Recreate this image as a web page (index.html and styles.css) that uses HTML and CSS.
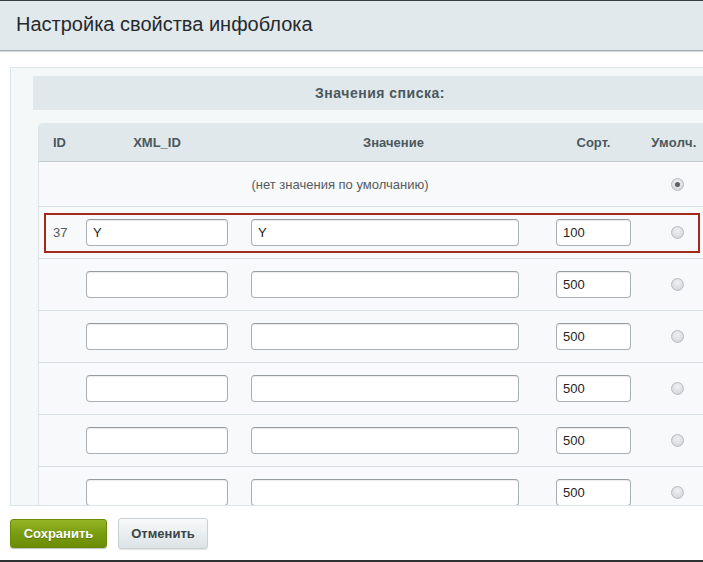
FILE: index.html
```html
<!DOCTYPE html>
<html lang="ru">
<head>
<meta charset="utf-8">
<title>Настройка свойства инфоблока</title>
<link rel="stylesheet" href="styles.css">
</head>
<body>
<div class="window">
  <div class="titlebar"><h1 class="title">Настройка свойства инфоблока</h1></div>
  <div class="content">
    <div class="panel">
      <div class="section-head">Значения списка:</div>
      <div class="table">
        <div class="row head">
          <div class="c-id">ID</div>
          <div class="c-xml">XML_ID</div>
          <div class="c-val">Значение</div>
          <div class="c-sort">Сорт.</div>
          <div class="c-def">Умолч.</div>
        </div>
        <div class="row none">
          <div class="c-none">(нет значения по умолчанию)</div>
          <div class="c-def"><span class="radio checked"></span></div>
        </div>
        <div class="row item marked">
          <div class="c-id">37</div>
          <div class="c-xml"><input class="field f-xml" type="text" value="Y"></div>
          <div class="c-val"><input class="field f-val" type="text" value="Y"></div>
          <div class="c-sort"><input class="field f-sort" type="text" value="100"></div>
          <div class="c-def"><span class="radio"></span></div>
          <div class="mark"></div>
        </div>
        <div class="row item">
          <div class="c-id"></div>
          <div class="c-xml"><input class="field f-xml" type="text" value=""></div>
          <div class="c-val"><input class="field f-val" type="text" value=""></div>
          <div class="c-sort"><input class="field f-sort" type="text" value="500"></div>
          <div class="c-def"><span class="radio"></span></div>
        </div>
        <div class="row item">
          <div class="c-id"></div>
          <div class="c-xml"><input class="field f-xml" type="text" value=""></div>
          <div class="c-val"><input class="field f-val" type="text" value=""></div>
          <div class="c-sort"><input class="field f-sort" type="text" value="500"></div>
          <div class="c-def"><span class="radio"></span></div>
        </div>
        <div class="row item">
          <div class="c-id"></div>
          <div class="c-xml"><input class="field f-xml" type="text" value=""></div>
          <div class="c-val"><input class="field f-val" type="text" value=""></div>
          <div class="c-sort"><input class="field f-sort" type="text" value="500"></div>
          <div class="c-def"><span class="radio"></span></div>
        </div>
        <div class="row item">
          <div class="c-id"></div>
          <div class="c-xml"><input class="field f-xml" type="text" value=""></div>
          <div class="c-val"><input class="field f-val" type="text" value=""></div>
          <div class="c-sort"><input class="field f-sort" type="text" value="500"></div>
          <div class="c-def"><span class="radio"></span></div>
        </div>
        <div class="row item">
          <div class="c-id"></div>
          <div class="c-xml"><input class="field f-xml" type="text" value=""></div>
          <div class="c-val"><input class="field f-val" type="text" value=""></div>
          <div class="c-sort"><input class="field f-sort" type="text" value="500"></div>
          <div class="c-def"><span class="radio"></span></div>
        </div>
      </div>
    </div>
  </div>
  <div class="buttons">
    <button class="btn btn-save" type="button">Сохранить</button>
    <button class="btn btn-cancel" type="button">Отменить</button>
  </div>
</div>
</body>
</html>
```

FILE: styles.css
```css
* { box-sizing: border-box; }
html, body {
  margin: 0;
  padding: 0;
  background: #ffffff;
  font-family: "Liberation Sans", Arial, sans-serif;
}
.window {
  width: 703px;
  height: 562px;
  overflow: hidden;
  display: flex;
  flex-direction: column;
  border-bottom: 2px solid #2f3233;
}
.titlebar {
  flex: none;
  height: 51px;
  background: #e1e9ec;
  border-top: 1px solid #3a3d3e;
  border-bottom: 1px solid #a5acaf;
  box-shadow: 0 1px 0 #d6dde0;
  display: flex;
  align-items: center;
  padding-left: 16px;
}
.title {
  margin: 0;
  font-weight: normal;
  font-size: 20px;
  color: #262a2c;
  padding-bottom: 2px;
}
.content {
  flex: none;
  padding: 16px 0 0 10px;
}
.panel {
  width: 740px;
  height: 439px;
  overflow: hidden;
  background: #f4f8f9;
  border: 1px solid #dce5e8;
  padding: 8px 0 0 22px;
}
.section-head {
  width: 694px;
  height: 34px;
  background: #e0e8eb;
  font-size: 14px;
  letter-spacing: 0.5px;
  font-weight: bold;
  color: #4a585e;
  display: flex;
  align-items: center;
  justify-content: center;
}
.table {
  margin: 13px 0 0 5px;
  width: 685px;
  background: #f7f9fa;
  border-left: 1px solid #dde4e7;
  border-top-left-radius: 4px;
}
.row {
  display: grid;
  grid-template-columns: 47px 165px 305px 75px 92px;
  align-items: center;
  border-bottom: 1px solid #d9e0e3;
  font-size: 13px;
  color: #555b5e;
  position: relative;
}
.row.head {
  height: 39px;
  background: #e0e8eb;
  border-bottom: 1px solid #c3cbce;
  border-top-left-radius: 4px;
  font-weight: bold;
  color: #4a585e;
}
.row.head .c-xml { text-align: center; padding-right: 23px; }
.row.head .c-val { text-align: center; padding-right: 20px; }
.row.head .c-sort { text-align: center; }
.row.head .c-def { text-align: center; padding-right: 6px; letter-spacing: 0.3px; }
.c-id { padding-left: 14px; }
.row.none { height: 45px; }
.c-none {
  grid-column: 1 / 5;
  text-align: center;
  padding-left: 10px;
  color: #555b5e;
}
.row.item { height: 52px; }
.c-def {
  display: flex;
  justify-content: center;
}
.field {
  display: block;
  height: 27px;
  margin: 0;
  padding: 0 6px;
  font-family: "Liberation Sans", Arial, sans-serif;
  font-size: 13px;
  color: #1f2326;
  background: #ffffff;
  border: 1px solid #a9b0b4;
  border-top-color: #959ca0;
  border-radius: 4px;
  box-shadow: inset 0 1px 1px rgba(0, 0, 0, 0.08);
  outline: none;
}
.f-xml { width: 142px; }
.f-val { width: 268px; }
.f-sort { width: 75px; }
.radio {
  display: block;
  width: 13px;
  height: 13px;
  border-radius: 50%;
  border: 1px solid #b7bcbf;
  background: radial-gradient(circle at 50% 35%, #f0f1f2 0%, #d8dbdd 70%, #cdd1d3 100%);
  position: relative;
}
.radio.checked::after {
  content: "";
  position: absolute;
  left: 3px;
  top: 3px;
  width: 5px;
  height: 5px;
  border-radius: 50%;
  background: #5c6164;
}
.mark {
  position: absolute;
  left: 5px;
  top: 6px;
  width: 656px;
  height: 40px;
  border: 2px solid #a3291d;
  pointer-events: none;
}
.buttons {
  flex: none;
  display: flex;
  align-items: center;
  gap: 11px;
  padding: 11px 0 0 10px;
  height: 43px;
}
.btn {
  font-family: "Liberation Sans", Arial, sans-serif;
  font-size: 13px;
  font-weight: bold;
  border-radius: 3px;
  padding: 0;
  cursor: pointer;
}
.btn-save {
  width: 97px;
  height: 29px;
  color: #ffffff;
  text-shadow: 0 1px 0 rgba(60, 80, 0, 0.5);
  background: linear-gradient(#94b524, #7a9c10 50%, #6b8c06);
  border: 1px solid #6a8a0a;
  box-shadow: 0 1px 1px rgba(0, 0, 0, 0.25);
}
.btn-cancel {
  width: 90px;
  height: 31px;
  color: #3d4446;
  background: linear-gradient(#f8fafa, #e9eef0 50%, #dce3e6);
  border: 1px solid #c8d0d3;
  box-shadow: 0 1px 1px rgba(0, 0, 0, 0.12);
}
```
